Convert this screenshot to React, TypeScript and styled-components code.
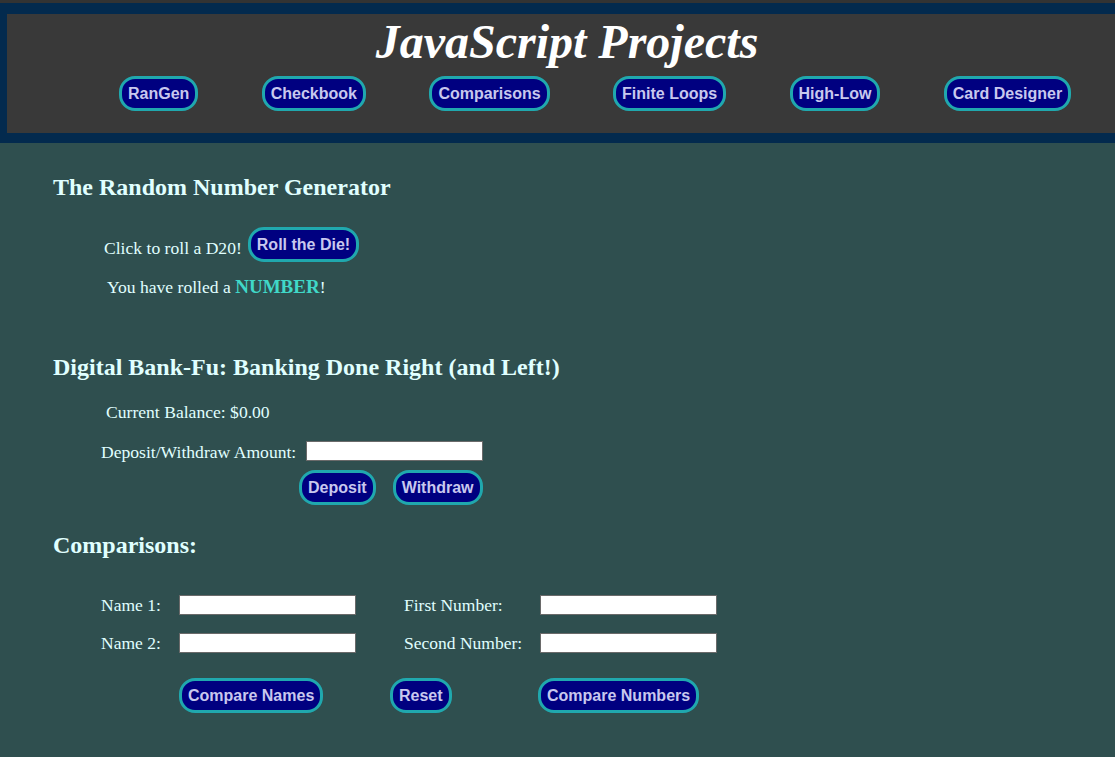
import React from "react";
import styled, { createGlobalStyle } from "styled-components";

const Global = createGlobalStyle`
  html, body { margin: 0; padding: 0; background: #2f4f4f; overflow: hidden; }
  body { font-family: "Liberation Serif", "Times New Roman", serif; color: #e0ffff; }
`;

const Header = styled.header`
  background: #032a4e;
  border-top: 3px solid #333333;
  padding: 11px 0 10px 7px;
`;

const HeaderBox = styled.div`
  background: #393939;
  height: 119px;
  display: flex;
  flex-direction: column;
  align-items: flex-start;
`;

const Title = styled.h1`
  margin: 0;
  align-self: stretch;
  text-align: center;
  padding-left: 12px;
  font-family: "Liberation Serif", "Times New Roman", serif;
  font-style: italic;
  font-weight: bold;
  font-size: 48px;
  line-height: 56px;
  color: #ffffff;
`;

const Nav = styled.nav`
  display: flex;
  gap: 63.4px;
  padding-left: 112px;
  margin-top: 6px;
`;

const Button = styled.button`
  height: 35px;
  padding: 0 6px;
  background: #000080;
  border: 3px solid #20a8ae;
  border-radius: 16px;
  color: #c8c8ee;
  font-family: "Liberation Sans", Arial, sans-serif;
  font-weight: bold;
  font-size: 16px;
  cursor: pointer;
  white-space: nowrap;
`;

const Main = styled.main`
  padding: 30px 0 40px 53px;
`;

const Heading = styled.h2<{ $top: number }>`
  margin: ${(p) => p.$top}px 0 0 0;
  font-size: 24px;
  line-height: 28px;
  font-weight: bold;
  color: #e0ffff;
`;

const Row = styled.div<{ $top: number; $indent: number }>`
  display: flex;
  align-items: center;
  margin-top: ${(p) => p.$top}px;
  padding-left: ${(p) => p.$indent}px;
  font-size: 17.6px;
  line-height: 20px;
`;

const Label = styled.span<{ $gap?: number; $drop?: number }>`
  margin-right: ${(p) => p.$gap ?? 6}px;
  padding-top: ${(p) => p.$drop ?? 3}px;
`;

const Num = styled.b`
  color: #40d8c8;
  font-size: 19px;
`;

const Input = styled.input`
  box-sizing: border-box;
  width: 177px;
  height: 20px;
  border: 1px solid #6a6a6a;
  background: #ffffff;
  padding: 0 2px;
`;

const BtnGroup = styled.div<{ $top: number; $indent: number }>`
  display: flex;
  gap: 17px;
  margin-top: ${(p) => p.$top}px;
  padding-left: ${(p) => p.$indent}px;
`;

const CompGrid = styled.div`
  display: grid;
  grid-template-columns: 78px 176px 49px 136px 177px;
  row-gap: 18px;
  align-items: center;
  margin-top: 36px;
  padding-left: 48px;
  font-size: 17.5px;
  line-height: 20px;
`;

const Spacer = styled.span``;

const CompButtons = styled.div`
  display: grid;
  grid-template-columns: 211px 148px auto;
  justify-items: start;
  margin-top: 25px;
  padding-left: 126px;
`;

export default function App() {
  return (
    <>
      <Global />
      <Header>
        <HeaderBox>
          <Title>JavaScript Projects</Title>
          <Nav>
            <Button>RanGen</Button>
            <Button>Checkbook</Button>
            <Button>Comparisons</Button>
            <Button>Finite Loops</Button>
            <Button>High-Low</Button>
            <Button>Card Designer</Button>
          </Nav>
        </HeaderBox>
      </Header>
      <Main>
        <Heading $top={0}>The Random Number Generator</Heading>
        <Row $top={26} $indent={51}>
          <Label $drop={6}>Click to roll a D20!</Label>
          <Button>Roll the Die!</Button>
        </Row>
        <Row $top={15} $indent={54}>
          You have rolled a&nbsp;<Num>NUMBER</Num>!
        </Row>

        <Heading $top={56}>Digital Bank-Fu: Banking Done Right (and Left!)</Heading>
        <Row $top={21} $indent={53}>
          Current Balance: $0.00
        </Row>
        <Row $top={17} $indent={48}>
          <Label $gap={10}>Deposit/Withdraw Amount:</Label>
          <Input type="text" />
        </Row>
        <BtnGroup $top={8} $indent={246}>
          <Button>Deposit</Button>
          <Button>Withdraw</Button>
        </BtnGroup>

        <Heading $top={26}>Comparisons:</Heading>
        <CompGrid>
          <span>Name 1:</span>
          <Input type="text" />
          <Spacer />
          <span>First Number:</span>
          <Input type="text" />
          <span>Name 2:</span>
          <Input type="text" />
          <Spacer />
          <span>Second Number:</span>
          <Input type="text" />
        </CompGrid>
        <CompButtons>
          <Button>Compare Names</Button>
          <Button>Reset</Button>
          <Button>Compare Numbers</Button>
        </CompButtons>
      </Main>
    </>
  );
}
